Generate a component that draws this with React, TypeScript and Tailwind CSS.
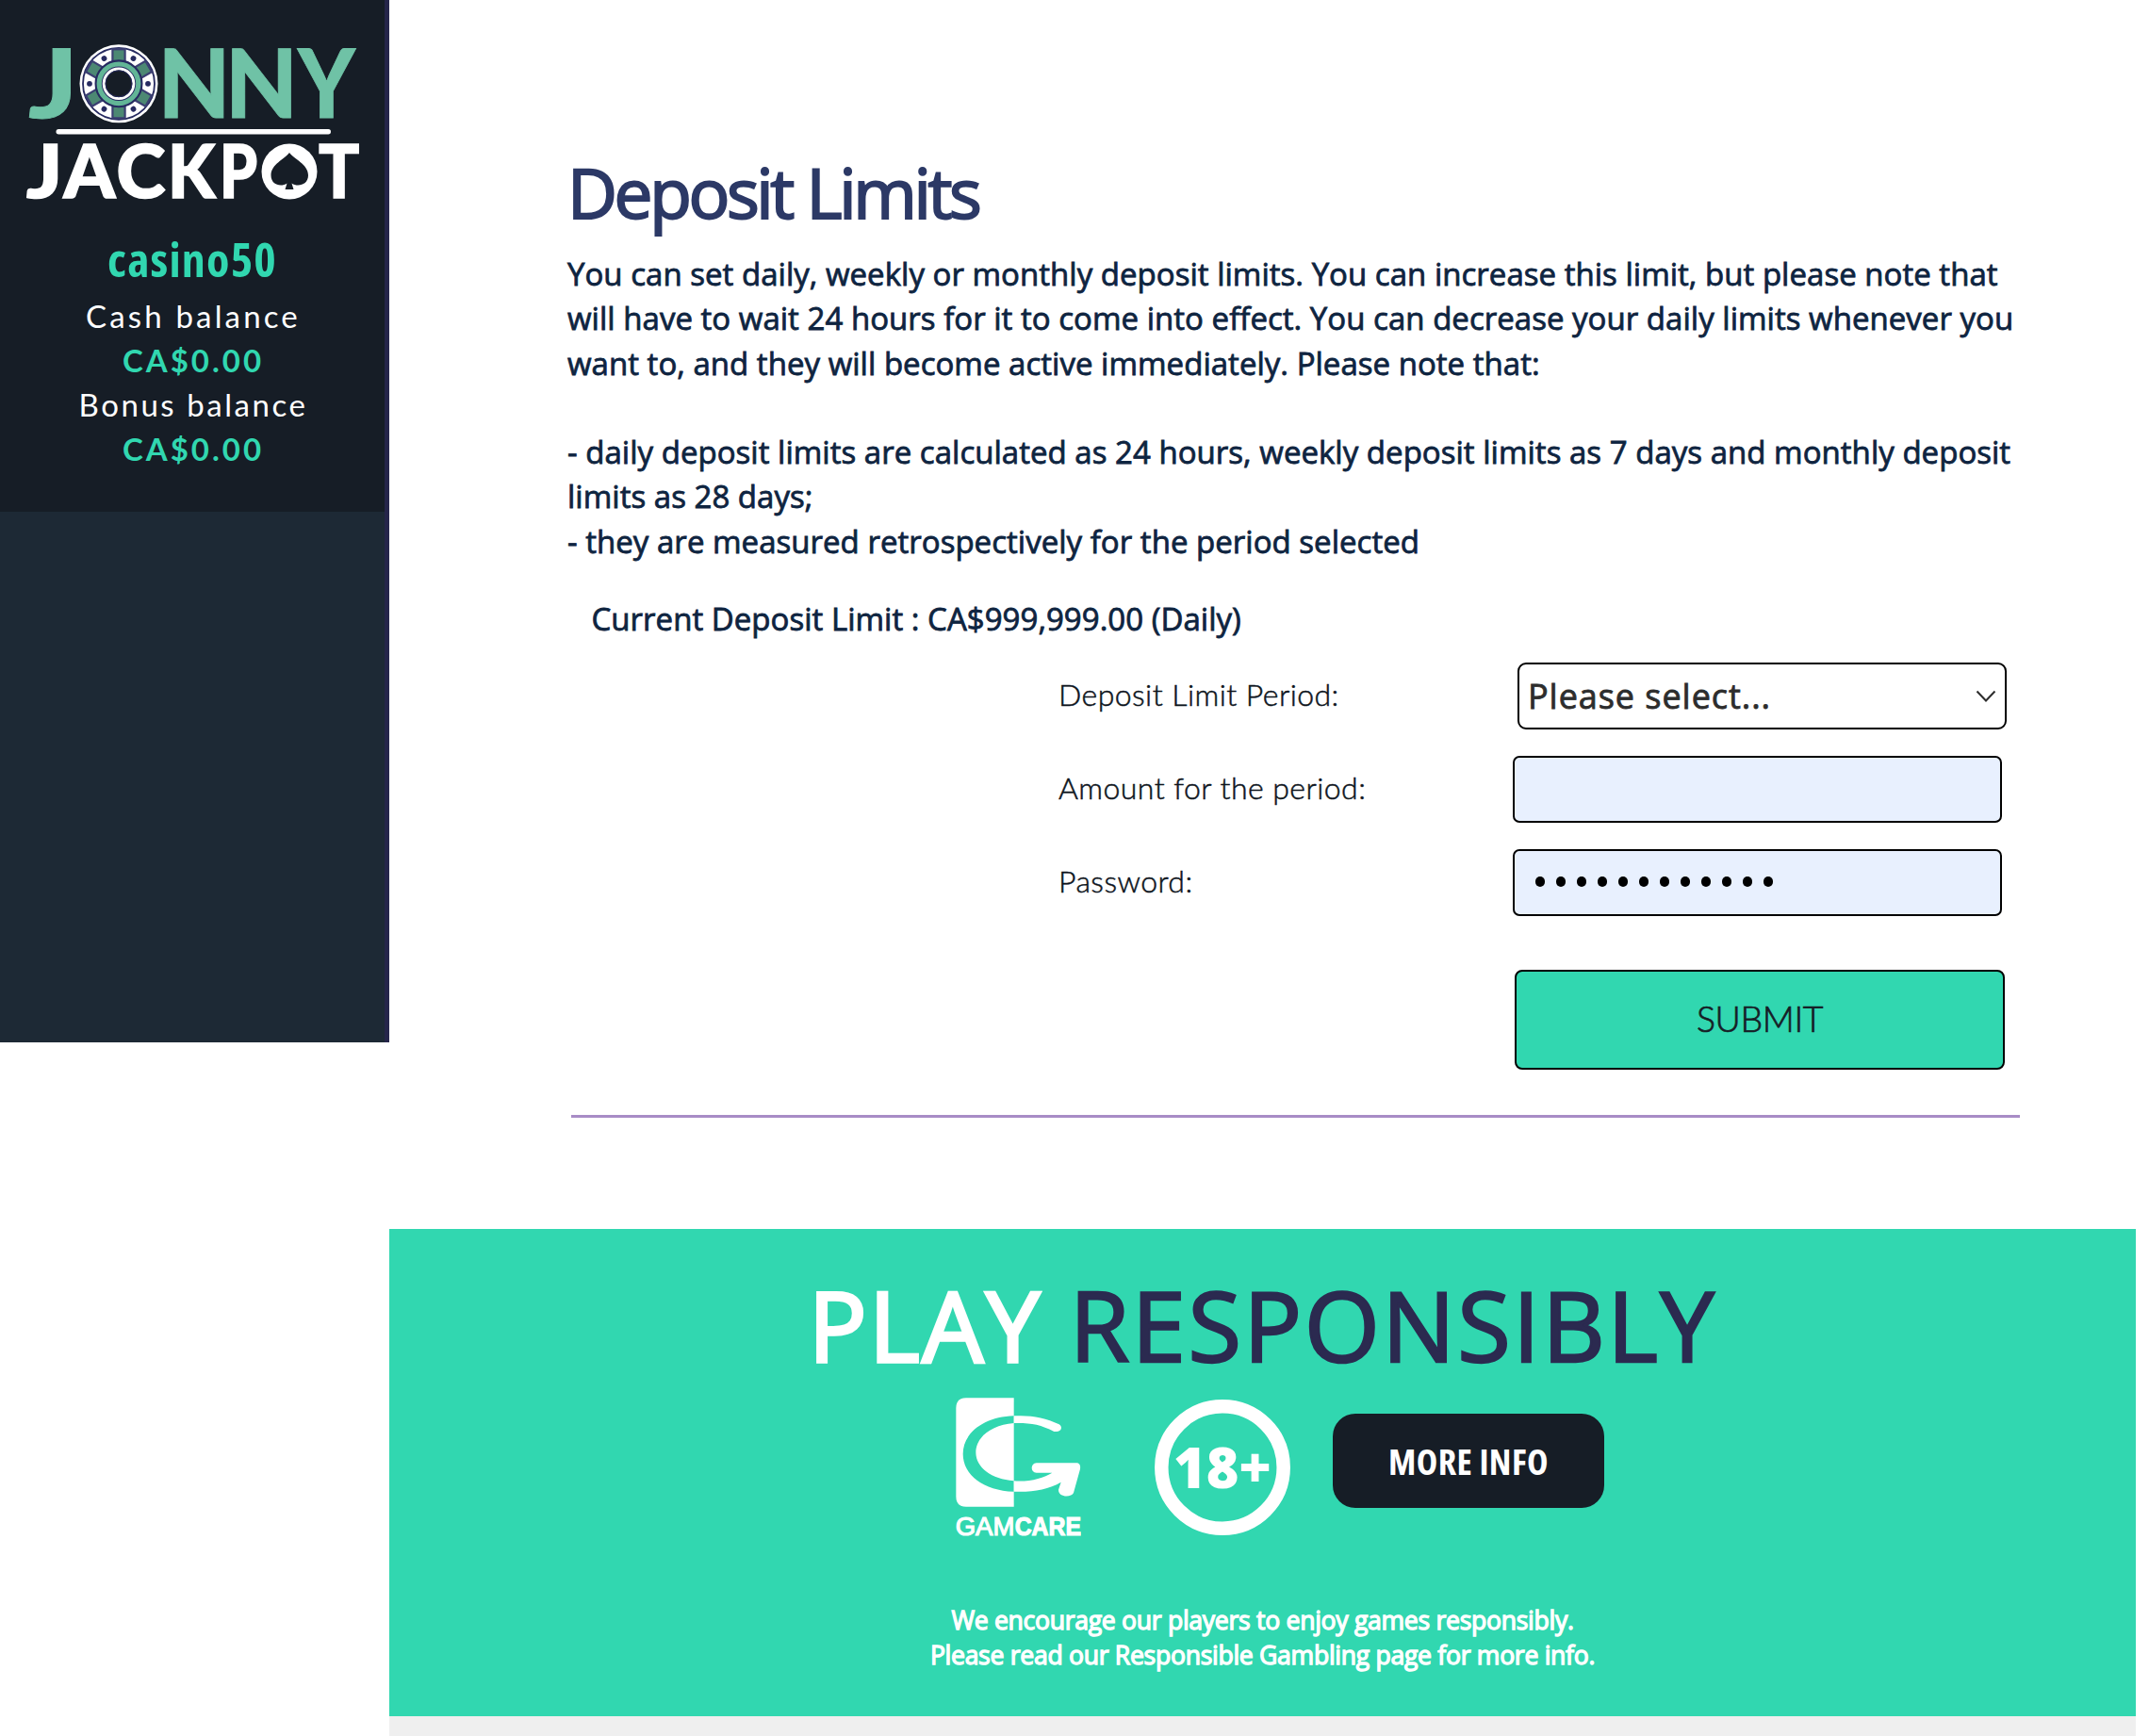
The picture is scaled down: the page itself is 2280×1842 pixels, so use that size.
import type { ReactNode } from "react";

const balances = [
  { label: "Cash balance", value: "CA$0.00", spacing: "tracking-[3.15px]" },
  { label: "Bonus balance", value: "CA$0.00", spacing: "tracking-[2.55px]" },
];

const limitText = [
  "You can set daily, weekly or monthly deposit limits. You can increase this limit, but please note that",
  "will have to wait 24 hours for it to come into effect. You can decrease your daily limits whenever you",
  "want to, and they will become active immediately. Please note that:",
  "\u00a0",
  "- daily deposit limits are calculated as 24 hours, weekly deposit limits as 7 days and monthly deposit",
  "limits as 28 days;",
  "- they are measured retrospectively for the period selected",
];

// char, x offset, horizontal stretch
const topLetters: [string, number, number][] = [
  ["J", 30, 1.22],
  ["N", 167.5, 0.99],
  ["N", 239, 0.99],
  ["Y", 316, 0.92],
];
const bottomLetters: [string, number, number][] = [
  ["J", 28, 1.14],
  ["A", 67.5, 1],
  ["C", 123.5, 1.01],
  ["K", 178, 0.93],
  ["P", 233, 0.82],
  ["T", 338, 0.92],
];

function Logo() {
  return (
    <svg width="408" height="220" viewBox="0 0 408 220" className="block font-['Lato'] font-black">
      <g fill="#6fc2a6" stroke="#6fc2a6" strokeWidth="0.8" fontSize="100.5">
        {topLetters.map(([char, x, stretch], i) => (
          <text key={i} transform={`translate(${x} 125) scale(${stretch} 1)`}>{char}</text>
        ))}
      </g>

      {/* Casino chip */}
      <g transform="translate(126 88.8)">
        <circle r="41.5" fill="#fff" />
        <circle r="38" fill="#fff" stroke="#262a60" strokeWidth="1.8" />
        {[0, 60, 120, 180, 240, 300].map((deg) => (
          <g key={deg} transform={`rotate(${deg})`}>
            <rect x="-6.6" y="-36.5" width="13.2" height="13" fill="#4c8873" stroke="#3b3f72" strokeWidth="2.2" />
            <circle cx="31" cy="0" r="2.9" fill="#262a60" />
          </g>
        ))}
        <circle r="20.8" fill="none" stroke="#262a60" strokeWidth="9.4" />
        <circle r="20.8" fill="none" stroke="#62b596" strokeWidth="5.2" />
        <circle r="15.8" fill="#161d26" stroke="#fff" strokeWidth="3" />
        <circle r="14" fill="none" stroke="#262a60" strokeWidth="1" />
      </g>

      <rect x="59.5" y="137" width="291.5" height="5.4" rx="2.7" fill="#fff" />

      <g fill="#fff" stroke="#fff" strokeWidth="1.6" fontSize="78">
        {bottomLetters.map(([char, x, stretch], i) => (
          <text key={i} transform={`translate(${x} 209.5) scale(${stretch} 1)`}>{char}</text>
        ))}
      </g>
      <circle cx="307" cy="182" r="29.5" fill="#fff" />
      <path
        d="M307 162C312 169 327 174 327 186C327 196 316 199 309.5 194.5L311.5 201H302.5L304.5 194.5C298 199 287.5 196 287.5 186C287.5 174 302 169 307 162Z"
        fill="#161d26"
      />
    </svg>
  );
}

function GamCare() {
  return (
    <svg width="133" height="148" viewBox="101 69 399 444" className="shrink-0">
      <path d="M286 70H134Q102 70 102 102V384Q102 416 134 416H286Z" fill="#fff" />
      <path
        d="M286 127C190 130 124 182 124 248C124 315 190 365 286 368V334C215 328 165 292 165 243C165 195 215 155 286 150Z"
        fill="#31d7b0"
      />
      <path d="M286 127C340 124 385 132 430 154C442 162 438 178 420 177H414C370 154 340 149 286 150Z" fill="#fff" />
      <path
        d="M286 334C335 338 380 325 408 308H358C338 308 338 278 358 277H485C495 277 499 285 497 296L476 372C470 386 428 388 428 362L436 338C395 362 340 371 286 368Z"
        fill="#fff"
      />
      <g fill="#fff" stroke="#fff" strokeWidth="3.5" className="font-['Liberation_Sans']" fontSize="84">
        <text x="100" y="507" textLength="188" lengthAdjust="spacingAndGlyphs">GAM</text>
        <text x="289" y="507" textLength="211" lengthAdjust="spacingAndGlyphs" className="font-bold">CARE</text>
      </g>
    </svg>
  );
}

function Adult() {
  return (
    <svg width="144" height="144" viewBox="0 0 144 144" className="mt-[2px] ml-[78.5px] shrink-0">
      <circle cx="72" cy="72" r="64.7" fill="none" stroke="#fff" strokeWidth="14.5" />
      <text
        x="20"
        y="94"
        fontSize="61"
        fill="#fff"
        textLength="104"
        lengthAdjust="spacingAndGlyphs"
        className="font-['Open_Sans'] font-extrabold"
      >
        18+
      </text>
    </svg>
  );
}

function FormRow({ label, children }: { label: string; children: ReactNode }) {
  return (
    <div className="flex h-[71px] items-center">
      <label className="w-[482px] pb-[3px] whitespace-nowrap font-['Lato'] text-[32px] font-light tracking-[0.45px] text-[#0d141c] [-webkit-text-stroke:0.5px_#0d141c]">
        {label}
      </label>
      {children}
    </div>
  );
}

export default function App() {
  return (
    <div className="flex h-[1842px] w-[2280px] overflow-hidden bg-white">
      {/* Sidebar */}
      <aside className="h-[1106px] w-[413px] shrink-0 border-r-[5px] border-[#25254a] bg-[#1d2935]">
        <div className="h-[543px] bg-[#161d26] text-center">
          <Logo />
          <div className="mt-[30px] font-['Open_Sans'] text-[50px] leading-[50px] font-bold tracking-[1.2px] text-[#31d7b0] [font-stretch:75%]">
            casino50
          </div>
          <div className="mt-[11.5px] pl-[2px] font-['Lato'] text-[33px] leading-[47.3px]">
            {balances.map((b) => (
              <div key={b.label}>
                <div className={`text-white ${b.spacing}`}>{b.label}</div>
                <div className="font-bold tracking-[3px] text-[#31d7b0]">{b.value}</div>
              </div>
            ))}
          </div>
        </div>
      </aside>

      <main className="w-[1853px] shrink-0">
        <section className="h-[1304px] pt-[154px] pl-[189px] font-['Open_Sans']">
          <h1 className="text-[73px] leading-[100px] font-normal tracking-[-3.4px] text-[#2c3966] [-webkit-text-stroke:2px_#2c3966]">
            Deposit Limits
          </h1>
          <div className="mt-[13px] text-[33px] leading-[47.25px] tracking-[0.025px] whitespace-nowrap text-[#0e2440] [-webkit-text-stroke:0.8px_#0e2440]">
            {limitText.map((line, i) => (
              <p key={i}>{line}</p>
            ))}
            <p className="mt-[35px] ml-[25.5px]">Current Deposit Limit : CA$999,999.00 (Daily)</p>
          </div>

          <form className="mt-[23px] ml-[521px] flex flex-col gap-7">
            <FormRow label="Deposit Limit Period:">
              <div className="ml-[5px] flex h-[71px] w-[519px] items-center justify-between rounded-[9px] border-2 border-black bg-white pr-[9px] pl-[9px]">
                <span className="text-[36px] tracking-[0.95px] text-[#2d2d2d] [-webkit-text-stroke:0.8px_#2d2d2d]">
                  Please select...
                </span>
                <svg width="22" height="14" viewBox="0 0 22 14" fill="none" stroke="#2d2d2d" strokeWidth="2">
                  <path d="M1.5 1.5L11 11.5L20.5 1.5" />
                </svg>
              </div>
            </FormRow>
            <FormRow label="Amount for the period:">
              <div className="h-[71px] w-[519px] rounded-[7px] border-2 border-black bg-[#e8f0fe]" />
            </FormRow>
            <FormRow label="Password:">
              <div className="flex h-[71px] w-[519px] items-center gap-[12px] rounded-[7px] border-2 border-black bg-[#e8f0fe] pb-[2px] pl-[21.5px]">
                {Array.from({ length: 12 }, (_, i) => (
                  <span key={i} className="h-[11px] w-[10.04px] rounded-full bg-black" />
                ))}
              </div>
            </FormRow>
            <button
              type="button"
              className="mt-[29px] ml-[484px] h-[106px] w-[520px] rounded-[8px] border-2 border-black bg-[#31d7b0] pb-[2px] font-['Lato'] text-[37.5px] font-light tracking-[-0.4px] text-[#161d26] [-webkit-text-stroke:0.7px_#161d26]"
            >
              SUBMIT
            </button>
          </form>

          <div className="mt-[48px] ml-[4px] h-[3px] w-[1537px] bg-[#a88cc6]" />
        </section>

        <footer className="h-[517px] bg-[#31d7b0] pt-[40.5px] font-['Open_Sans']">
          <h2 className="text-center text-[103px] leading-[120px] font-normal tracking-[2.4px] text-[#2b2a50] [-webkit-text-stroke:2.4px_#2b2a50]">
            <span className="text-white [-webkit-text-stroke:3.4px_#fff]">PLAY</span> RESPONSIBLY
          </h2>
          <div className="mt-[18px] flex h-[148px] items-start pl-[600.5px]">
            <GamCare />
            <Adult />
            <button
              type="button"
              className="mt-[17px] ml-[45px] h-[100px] w-[288px] rounded-[24px] bg-[#161d26] pt-px text-[38px] font-bold tracking-[0.4px] text-white [font-stretch:75%]"
            >
              MORE INFO
            </button>
          </div>
          <p className="mt-[70.5px] text-center text-[26.6px] leading-[36.7px] tracking-[-0.3px] text-white [-webkit-text-stroke:1.3px_#fff]">
            We encourage our players to enjoy games responsibly.
            <br />
            Please read our Responsible Gambling page for more info.
          </p>
        </footer>
        <div className="h-[21px] bg-[#efefef]" />
      </main>
    </div>
  );
}
